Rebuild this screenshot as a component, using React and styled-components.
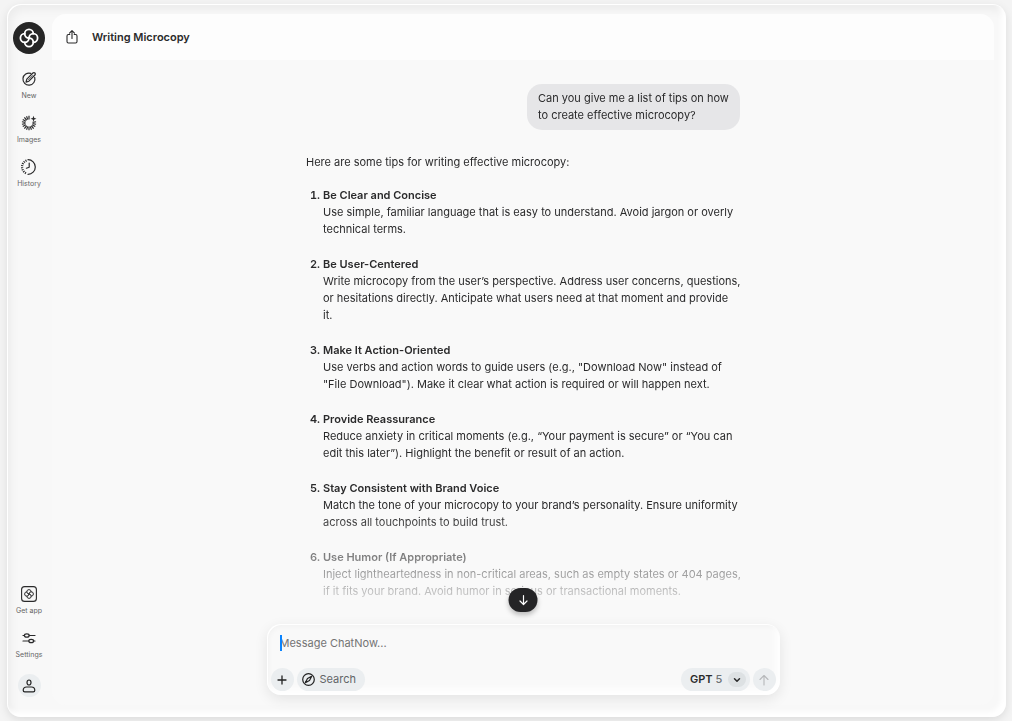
import React, { useState } from "react";
import styled, { createGlobalStyle } from "styled-components";

const GlobalStyle = createGlobalStyle`
  * {
    box-sizing: border-box;
  }
  body {
    margin: 0;
    background: #f4f4f4;
    color: #2a2a2b;
    font-family: Inter, "Liberation Sans", sans-serif;
    font-size: 11px;
    line-height: 17px;
  }
  button, select, textarea {
    font: inherit;
    color: inherit;
    border: 0;
    margin: 0;
    padding: 0;
    background: none;
  }
  button, select {
    cursor: pointer;
  }
`;

const Page = styled.div`
  display: flex;
  height: 100vh;
  padding: 4px 6px 4px 7px;
`;

const Window = styled.div`
  flex: 1;
  min-width: 0;
  display: flex;
  border-radius: 14px;
  background: #f8f8f8;
  box-shadow: 0 3px 10px rgba(0, 0, 0, 0.1), inset 1px 1px 0 #fff,
    inset -5px -5px 5px #fff, inset 4px 6px 10px rgba(0, 0, 0, 0.05);
`;

const Sidebar = styled.nav`
  flex: none;
  width: 45px;
  display: flex;
  flex-direction: column;
  align-items: center;
  justify-content: space-between;
  padding: 18px 1px 20px 0;
`;

const Group = styled.div`
  display: flex;
  flex-direction: column;
  align-items: center;
  gap: 14px;
`;

const Logo = styled.a`
  display: flex;
  align-items: center;
  justify-content: center;
  width: 32px;
  height: 32px;
  margin-bottom: 3px;
  border-radius: 50%;
  background: #262626;
  color: #fff;
`;

const NavButton = styled.button`
  display: flex;
  flex-direction: column;
  align-items: center;
  gap: 4px;
  color: #2a2a2b;
  span {
    font-size: 7px;
    line-height: 10px;
    color: #656565;
    white-space: nowrap;
  }
`;

const RoundButton = styled.button`
  flex: none;
  display: flex;
  align-items: center;
  justify-content: center;
  width: 23px;
  height: 23px;
  border-radius: 50%;
  background: #ebeef0;
  color: ${(props) => (props.$muted ? "#b6b8ba" : "#222")};
`;

const Main = styled.main`
  flex: 1;
  min-width: 0;
  display: flex;
  flex-direction: column;
  margin: 10px 12px 12px 0;
  border-radius: 14px;
  background: #f9f9f9;
`;

const Header = styled.header`
  flex: none;
  display: flex;
  align-items: center;
  gap: 12px;
  height: 46px;
  padding: 0 12px;
  border-radius: 14px 14px 0 0;
  background: #fdfdfd;
`;

const Title = styled.h1`
  margin: 0;
  font-size: 11px;
  font-weight: 600;
`;

const IconButton = styled.button`
  display: flex;
`;

const Thread = styled.section`
  flex: 1;
  min-height: 0;
  overflow: hidden;
  padding-top: 24px;
  mask-image: linear-gradient(to bottom, #000 calc(100% - 115px), transparent);
`;

const Column = styled.div`
  display: flex;
  flex-direction: column;
  width: 100%;
  max-width: 434px;
  margin: 0 auto;
`;

const Bubble = styled.p`
  align-self: flex-end;
  max-width: 213px;
  margin: 0 0 24px;
  padding: 6px 11px;
  border-radius: 15px;
  background: #e6e6e8;
`;

const Answer = styled.p`
  margin: 0;
`;

const Tips = styled.ol`
  margin: 16px -8px 0 0;
  padding-left: 17px;
  display: flex;
  flex-direction: column;
  gap: 18px;
`;

const Tip = styled.li`
  &::marker {
    font-weight: 600;
  }
  h2 {
    margin: 0;
    font-size: 11px;
    font-weight: 600;
  }
  p {
    margin: 0;
    white-space: pre-line;
  }
`;

const Dock = styled.div`
  flex: none;
  position: relative;
  width: 100%;
  max-width: 513px;
  margin: 0 auto 10px;
`;

const ScrollDown = styled.button`
  position: absolute;
  left: 50%;
  bottom: calc(100% + 12px);
  transform: translateX(-50%);
  display: flex;
  align-items: center;
  justify-content: center;
  width: 29px;
  height: 24px;
  border-radius: 12px;
  background: #242426;
  color: #fff;
  box-shadow: 0 3px 5px rgba(0, 0, 0, 0.25);
`;

const Composer = styled.form`
  display: flex;
  flex-direction: column;
  gap: 16px;
  padding: 11px 4px 4px;
  border-radius: 14px;
  background: #f9f9f9;
  box-shadow: 0 4px 14px rgba(0, 0, 0, 0.09), inset 1px 1px 0 #fff,
    inset -4px -6px 7px #fff, inset 2px 3px 5px rgba(0, 0, 0, 0.03);
`;

const Field = styled.div`
  position: relative;
  display: flex;
  padding: 0 9px;
`;

const Input = styled.textarea`
  width: 100%;
  height: 17px;
  resize: none;
  outline: none;
  overflow: hidden;
  caret-color: transparent;
  &::placeholder {
    color: #747474;
    opacity: 1;
  }
`;

const Caret = styled.span`
  position: absolute;
  left: 9px;
  top: 0;
  width: 2px;
  height: 16px;
  background: #0a84ff;
`;

const Tools = styled.div`
  display: flex;
  align-items: center;
  gap: 3px;
`;

const SearchButton = styled.button`
  display: flex;
  align-items: center;
  gap: 5px;
  height: 23px;
  padding: 0 9px 0 5px;
  border-radius: 12px;
  background: #ebeef0;
  color: #626567;
  svg {
    color: #222;
  }
`;

const ModelPicker = styled.label`
  position: relative;
  display: flex;
  align-items: center;
  gap: 3px;
  height: 23px;
  margin-left: auto;
  padding: 0 4px 0 9px;
  border-radius: 12px;
  background: #ebeef0;
  font-weight: 600;
  select {
    appearance: none;
    width: 30px;
    height: 23px;
    color: #6d7274;
    font-weight: 500;
  }
`;

const Chevron = styled.span`
  position: absolute;
  right: 4px;
  top: 4px;
  display: flex;
  align-items: center;
  justify-content: center;
  width: 18px;
  height: 15px;
  border-radius: 8px;
  background: #dde1e3;
  pointer-events: none;
`;

function Icon({ size = 16, width = 1, children }) {
  return (
    <svg
      width={size}
      height={size}
      viewBox={`0 0 ${size} ${size}`}
      fill="none"
      stroke="currentColor"
      strokeWidth={width}
      strokeLinecap="round"
      strokeLinejoin="round"
      aria-hidden="true"
    >
      {children}
    </svg>
  );
}

// four loops, each one open for a quarter turn so they twist in the middle
function Knot({ cx, cy, r }) {
  return (
    <g transform={`translate(${cx} ${cy})`}>
      {[0, 90, 180, 270].map((angle) => (
        <path
          key={angle}
          transform={`rotate(${angle})`}
          d={`M0 0A${r} ${r} 0 1 1 ${r} ${-r}`}
        />
      ))}
    </g>
  );
}

function NewIcon() {
  return (
    <Icon width={1.2}>
      <path d="M9.800 2.400A6 6 0 1 0 13.700 6.400" />
      <path d="M5 11.100l.8-3L11.900 2a1.400 1.400 0 0 1 2 2L7.900 10.200z" />
      <path d="M7.200 9l4.400-4.500" strokeWidth="0.700" />
    </Icon>
  );
}

function ImagesIcon() {
  const rays = [];
  for (let angle = 0; angle < 360; angle += 20) {
    if (angle > 10 && angle < 75) continue;
    rays.push(
      <path key={angle} transform={`rotate(${angle} 8 8)`} d="M8 .8v3.600" />
    );
  }
  return (
    <Icon width={1.2}>
      <g strokeLinecap="butt">{rays}</g>
      <path
        d="M12.500.8l.8 2.200 2.200.8-2.200.8-.8 2.200-.8-2.200-2.200-.8 2.200-.8z"
        fill="currentColor"
        stroke="none"
      />
    </Icon>
  );
}

function HistoryIcon() {
  return (
    <Icon width={1.2}>
      <path d="M7 .7A7.300 7.300 0 1 1 7 15.300" />
      <path
        d="M5.500 1.500A7 7 0 0 0 5.500 14.500"
        strokeWidth="2.200"
        strokeLinecap="butt"
        strokeDasharray="1.100 1"
      />
      <path d="M8.200 4v4.200L5.400 9.200" />
    </Icon>
  );
}

function AppIcon() {
  return (
    <Icon width={1.1}>
      <rect x="0.600" y="0.600" width="14.800" height="14.800" rx="3" />
      <g strokeWidth="1">
        <Knot cx={8} cy={8} r={2.200} />
      </g>
    </Icon>
  );
}

function SettingsIcon() {
  return (
    <Icon width={1.2}>
      <path d="M2 5.500h1.400M8.200 5.500H14M2 11h5.800M12.600 11H14" />
      <ellipse cx="5.800" cy="5.500" rx="2.400" ry="1.700" />
      <ellipse cx="10.200" cy="11" rx="2.400" ry="1.700" />
    </Icon>
  );
}

const tips = [
  {
    title: "Be Clear and Concise",
    text: "Use simple, familiar language that is easy to understand. Avoid jargon or overly technical terms.",
  },
  {
    title: "Be User-Centered",
    text: "Write microcopy from the user’s perspective. Address user concerns, questions, or hesitations directly. Anticipate what users need at that moment and provide\nit.",
  },
  {
    title: "Make It Action-Oriented",
    text: 'Use verbs and action words to guide users (e.g., "Download Now" instead of "File Download"). Make it clear what action is required or will happen next.',
  },
  {
    title: "Provide Reassurance",
    text: "Reduce anxiety in critical moments (e.g., “Your payment is secure” or “You can edit this later”). Highlight the benefit or result of an action.",
  },
  {
    title: "Stay Consistent with Brand Voice",
    text: "Match the tone of your microcopy to your brand’s personality. Ensure uniformity across all touchpoints to build trust.",
  },
  {
    title: "Use Humor (If Appropriate)",
    text: "Inject lightheartedness in non-critical areas, such as empty states or 404 pages, if it fits your brand. Avoid humor in serious or transactional moments.",
  },
];

export default function App() {
  const [message, setMessage] = useState("");

  return (
    <Page>
      <GlobalStyle />
      <Window>
        <Sidebar>
          <Group>
            <Logo href="#" aria-label="ChatNow">
              <Icon size={20} width={1.8}>
                <Knot cx={10} cy={10} r={4.300} />
              </Icon>
            </Logo>
            <NavButton>
              <NewIcon />
              <span>New</span>
            </NavButton>
            <NavButton>
              <ImagesIcon />
              <span>Images</span>
            </NavButton>
            <NavButton>
              <HistoryIcon />
              <span>History</span>
            </NavButton>
          </Group>
          <Group>
            <NavButton>
              <AppIcon />
              <span>Get app</span>
            </NavButton>
            <NavButton>
              <SettingsIcon />
              <span>Settings</span>
            </NavButton>
            <RoundButton aria-label="Account">
              <Icon size={14} width={1.2}>
                <ellipse cx="7" cy="3.500" rx="2" ry="2.500" />
                <path d="M4.500 8h5c2 0 3.300 1.500 3.300 3.200 0 1-.6 1.700-1.600 1.700H2.800c-1 0-1.600-.7-1.600-1.700C1.200 9.500 2.500 8 4.500 8z" />
              </Icon>
            </RoundButton>
          </Group>
        </Sidebar>
        <Main>
          <Header>
            <IconButton aria-label="Share">
              <Icon width={1.1}>
                <path d="M5.800 5.500H4.400c-.8 0-1.400.6-1.400 1.400v5.700c0 .8.600 1.400 1.400 1.400h7.200c.8 0 1.400-.6 1.400-1.400V6.900c0-.8-.6-1.400-1.400-1.400h-1.400" />
                <path d="M8 9.500V1.800M5.500 4.200L8 1.700l2.500 2.500" />
              </Icon>
            </IconButton>
            <Title>Writing Microcopy</Title>
          </Header>
          <Thread>
            <Column>
              <Bubble>
                Can you give me a list of tips on how to create effective
                microcopy?
              </Bubble>
              <Answer>Here are some tips for writing effective microcopy:</Answer>
              <Tips>
                {tips.map((tip) => (
                  <Tip key={tip.title}>
                    <h2>{tip.title}</h2>
                    <p>{tip.text}</p>
                  </Tip>
                ))}
              </Tips>
            </Column>
          </Thread>
          <Dock>
            <ScrollDown aria-label="Scroll to bottom">
              <Icon size={14} width={1.2}>
                <path d="M7 2.500v9M3.500 8L7 11.500 10.500 8" />
              </Icon>
            </ScrollDown>
            <Composer onSubmit={(e) => e.preventDefault()}>
              <Field>
                <Input
                  rows={1}
                  aria-label="Message"
                  placeholder="Message ChatNow..."
                  value={message}
                  onChange={(e) => setMessage(e.target.value)}
                />
                {!message && <Caret />}
              </Field>
              <Tools>
                <RoundButton type="button" aria-label="Add">
                  <Icon size={10} width={1.3}>
                    <path d="M5 1v8M1 5h8" />
                  </Icon>
                </RoundButton>
                <SearchButton type="button">
                  <Icon size={13} width={1.2}>
                    <circle cx="6.500" cy="6.500" r="5.800" />
                    <path d="M9.600 3.400L7.500 7.500 3.400 9.600l2.100-4.100z" />
                  </Icon>
                  Search
                </SearchButton>
                <ModelPicker>
                  GPT
                  <select defaultValue="5">
                    <option value="5">5</option>
                    <option value="4">4</option>
                  </select>
                  <Chevron>
                    <Icon size={8} width={1.5}>
                      <path d="M1.500 2.800L4 5.300l2.500-2.500" />
                    </Icon>
                  </Chevron>
                </ModelPicker>
                <RoundButton $muted aria-label="Send">
                  <Icon size={12} width={1.1}>
                    <path d="M6 11V1.500M2 5.500l4-4 4 4" />
                  </Icon>
                </RoundButton>
              </Tools>
            </Composer>
          </Dock>
        </Main>
      </Window>
    </Page>
  );
}
